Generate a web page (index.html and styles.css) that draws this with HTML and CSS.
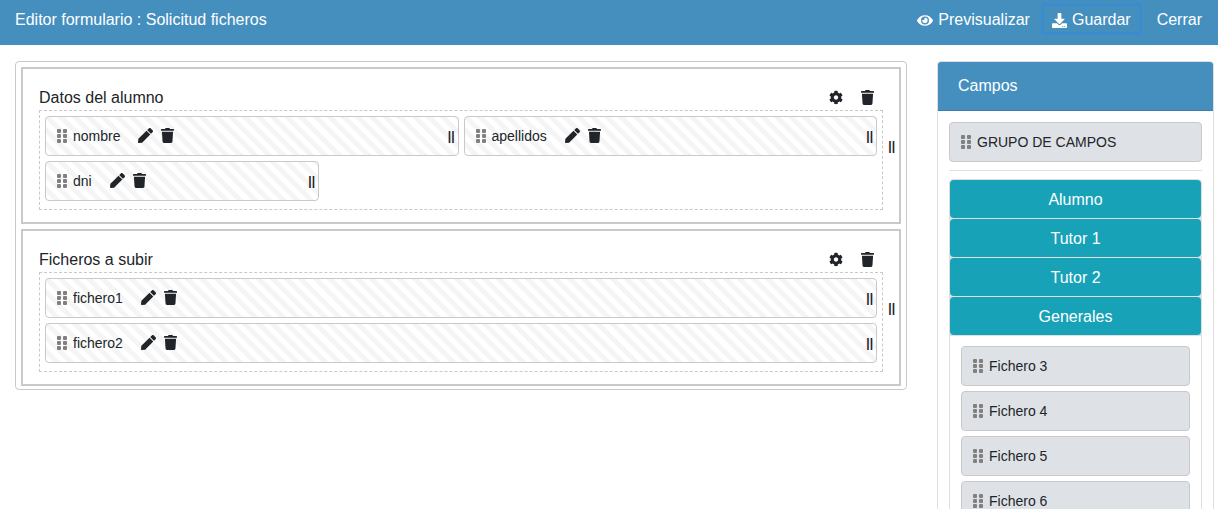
FILE: index.html
```html
<!DOCTYPE html>
<html lang="es">
<head>
    <meta charset="UTF-8">
    <meta name="viewport" content="width=device-width, initial-scale=1.0">
    <title>Editor formulario</title>
    <link rel="stylesheet" href="styles.css">
</head>
<body>

    <!-- Shared icons -->
    <svg class="sprite" aria-hidden="true">
        <symbol id="eye" viewBox="0 0 576 512"><path d="M572.52 241.4C518.29 135.59 410.93 64 288 64S57.68 135.64 3.48 241.41a32.35 32.35 0 0 0 0 29.19C57.71 376.41 165.07 448 288 448s230.32-71.64 284.52-177.41a32.35 32.35 0 0 0 0-29.19zM288 400a144 144 0 1 1 144-144 143.93 143.93 0 0 1-144 144zm0-240a95.31 95.31 0 0 0-25.31 3.79 47.85 47.85 0 0 1-66.9 66.9A95.78 95.78 0 1 0 288 160z"/></symbol>
        <symbol id="download" viewBox="0 0 512 512"><path d="M216 0h80c13.3 0 24 10.7 24 24v168h87.7c17.8 0 26.7 21.5 14.1 34.1L269.7 378.3c-7.5 7.5-19.8 7.5-27.3 0L90.1 226.1c-12.6-12.6-3.7-34.1 14.1-34.1H192V24c0-13.3 10.7-24 24-24zm296 376v112c0 13.3-10.7 24-24 24H24c-13.3 0-24-10.7-24-24V376c0-13.3 10.7-24 24-24h146.700l49 49c20.100 20.100 52.500 20.100 72.600 0l49-49H488c13.300 0 24 10.700 24 24zm-124 88c0-11-9-20-20-20s-20 9-20 20 9 20 20 20 20-9 20-20zm64 0c0-11-9-20-20-20s-20 9-20 20 9 20 20 20 20-9 20-20z"/></symbol>
        <symbol id="pen" viewBox="0 0 512 512"><path d="M290.740 93.240l128.020 128.020-277.990 277.990-114.140 12.600C11.350 513.540-1.560 500.620.14 485.340l12.700-114.220 277.900-277.880zm207.200-19.060l-60.110-60.110c-18.750-18.750-49.160-18.750-67.910 0l-56.550 56.550 128.020 128.020 56.550-56.550c18.750-18.760 18.750-49.160 0-67.910z"/></symbol>
        <symbol id="trash" viewBox="0 0 448 512"><path d="M432 32H312l-9.400-18.700A24 24 0 0 0 281.100 0H166.800a23.720 23.720 0 0 0-21.400 13.300L136 32H16A16 16 0 0 0 0 48v32a16 16 0 0 0 16 16h416a16 16 0 0 0 16-16V48a16 16 0 0 0-16-16zM53.200 467a48 48 0 0 0 47.900 45h245.800a48 48 0 0 0 47.900-45L416 128H32z"/></symbol>
        <symbol id="cog" viewBox="0 0 512 512"><path d="M487.400 315.700l-42.600-24.600c4.300-23.200 4.300-47 0-70.200l42.600-24.600c4.900-2.800 7.100-8.600 5.500-14-11.100-35.600-30-67.800-54.700-94.600-3.800-4.100-10-5.100-14.800-2.300L380.800 110c-17.900-15.400-38.500-27.300-60.800-35.100V25.800c0-5.600-3.900-10.500-9.400-11.700-36.700-8.200-74.300-7.800-109.200 0-5.500 1.200-9.400 6.100-9.400 11.700V75c-22.200 7.900-42.800 19.800-60.800 35.100L88.700 85.500c-4.900-2.800-11-1.900-14.800 2.300-24.700 26.700-43.600 58.900-54.700 94.600-1.700 5.400.6 11.200 5.500 14L67.300 221c-4.300 23.200-4.300 47 0 70.200l-42.600 24.600c-4.900 2.800-7.100 8.600-5.500 14 11.100 35.600 30 67.800 54.700 94.600 3.800 4.100 10 5.100 14.800 2.300l42.600-24.600c17.900 15.400 38.500 27.300 60.800 35.100v49.200c0 5.600 3.900 10.500 9.400 11.700 36.700 8.200 74.300 7.800 109.200 0 5.500-1.200 9.400-6.100 9.400-11.700v-49.200c22.200-7.900 42.800-19.800 60.800-35.100l42.600 24.600c4.900 2.800 11 1.900 14.800-2.300 24.700-26.700 43.600-58.900 54.700-94.600 1.500-5.500-.7-11.300-5.600-14.100zM256 336c-44.100 0-80-35.900-80-80s35.900-80 80-80 80 35.900 80 80-35.900 80-80 80z"/></symbol>
        <symbol id="grip" viewBox="0 0 10 14"><rect width="4" height="4" rx="1"/><rect x="6" width="4" height="4" rx="1"/><rect y="5" width="4" height="4" rx="1"/><rect x="6" y="5" width="4" height="4" rx="1"/><rect y="10" width="4" height="4" rx="1"/><rect x="6" y="10" width="4" height="4" rx="1"/></symbol>
    </svg>

    <header class="topbar">
        <h1 class="topbar-title">Editor formulario : Solicitud ficheros</h1>
        <button class="btn" type="button"><svg class="icon icon-eye"><use href="#eye"/></svg>Previsualizar</button>
        <button class="btn btn-active" type="button"><svg class="icon icon-download"><use href="#download"/></svg>Guardar</button>
        <button class="btn" type="button">Cerrar</button>
    </header>

    <div class="layout">
        <main class="board">
            <section class="group">
                <div class="group-head">
                    <h2 class="group-title">Datos del alumno</h2>
                    <button class="icon-btn" type="button" aria-label="Configurar"><svg class="icon icon-cog"><use href="#cog"/></svg></button>
                    <button class="icon-btn" type="button" aria-label="Eliminar"><svg class="icon icon-trash"><use href="#trash"/></svg></button>
                </div>
                <div class="fields">
                    <div class="field half">
                        <svg class="icon grip"><use href="#grip"/></svg>
                        <span class="field-name">nombre</span>
                        <button class="icon-btn" type="button" aria-label="Editar"><svg class="icon icon-pen"><use href="#pen"/></svg></button>
                        <button class="icon-btn" type="button" aria-label="Eliminar"><svg class="icon icon-trash"><use href="#trash"/></svg></button>
                        <span class="resize">||</span>
                    </div>
                    <div class="field half">
                        <svg class="icon grip"><use href="#grip"/></svg>
                        <span class="field-name">apellidos</span>
                        <button class="icon-btn" type="button" aria-label="Editar"><svg class="icon icon-pen"><use href="#pen"/></svg></button>
                        <button class="icon-btn" type="button" aria-label="Eliminar"><svg class="icon icon-trash"><use href="#trash"/></svg></button>
                        <span class="resize">||</span>
                    </div>
                    <div class="field third">
                        <svg class="icon grip"><use href="#grip"/></svg>
                        <span class="field-name">dni</span>
                        <button class="icon-btn" type="button" aria-label="Editar"><svg class="icon icon-pen"><use href="#pen"/></svg></button>
                        <button class="icon-btn" type="button" aria-label="Eliminar"><svg class="icon icon-trash"><use href="#trash"/></svg></button>
                        <span class="resize">||</span>
                    </div>
                </div>
                <span class="group-resize">||</span>
            </section>

            <section class="group">
                <div class="group-head">
                    <h2 class="group-title">Ficheros a subir</h2>
                    <button class="icon-btn" type="button" aria-label="Configurar"><svg class="icon icon-cog"><use href="#cog"/></svg></button>
                    <button class="icon-btn" type="button" aria-label="Eliminar"><svg class="icon icon-trash"><use href="#trash"/></svg></button>
                </div>
                <div class="fields">
                    <div class="field">
                        <svg class="icon grip"><use href="#grip"/></svg>
                        <span class="field-name">fichero1</span>
                        <button class="icon-btn" type="button" aria-label="Editar"><svg class="icon icon-pen"><use href="#pen"/></svg></button>
                        <button class="icon-btn" type="button" aria-label="Eliminar"><svg class="icon icon-trash"><use href="#trash"/></svg></button>
                        <span class="resize">||</span>
                    </div>
                    <div class="field">
                        <svg class="icon grip"><use href="#grip"/></svg>
                        <span class="field-name">fichero2</span>
                        <button class="icon-btn" type="button" aria-label="Editar"><svg class="icon icon-pen"><use href="#pen"/></svg></button>
                        <button class="icon-btn" type="button" aria-label="Eliminar"><svg class="icon icon-trash"><use href="#trash"/></svg></button>
                        <span class="resize">||</span>
                    </div>
                </div>
                <span class="group-resize">||</span>
            </section>
        </main>

        <aside class="panel">
            <h2 class="panel-head">Campos</h2>
            <div class="panel-body">
                <div class="source"><svg class="icon grip"><use href="#grip"/></svg>GRUPO DE CAMPOS</div>
                <hr class="divider">
                <div class="accordion">
                    <button class="section-btn" type="button">Alumno</button>
                    <button class="section-btn" type="button">Tutor 1</button>
                    <button class="section-btn" type="button">Tutor 2</button>
                    <button class="section-btn" type="button">Generales</button>
                    <div class="section-body">
                        <div class="source"><svg class="icon grip"><use href="#grip"/></svg>Fichero 3</div>
                        <div class="source"><svg class="icon grip"><use href="#grip"/></svg>Fichero 4</div>
                        <div class="source"><svg class="icon grip"><use href="#grip"/></svg>Fichero 5</div>
                        <div class="source"><svg class="icon grip"><use href="#grip"/></svg>Fichero 6</div>
                    </div>
                </div>
            </div>
        </aside>
    </div>

</body>
</html>
```
FILE: styles.css
```css
* {
    box-sizing: border-box;
}
body {
    margin: 0;
    font-family: "Liberation Sans", Arial, sans-serif;
    font-size: 16px;
    line-height: 24px;
    color: #212529;
    background: #fff;
}
h1, h2 {
    margin: 0;
    font-size: 16px;
    font-weight: normal;
}
button {
    font-family: inherit;
    font-size: 16px;
    line-height: 24px;
    border: none;
    cursor: pointer;
}
.sprite {
    display: none;
}
.icon {
    display: block;
    flex: none;
    fill: currentColor;
}
.icon-eye {
    width: 16px;
    height: 15px;
}
.icon-download {
    width: 15px;
    height: 15px;
}
.icon-pen {
    width: 15px;
    height: 15px;
}
.icon-trash {
    width: 13px;
    height: 15px;
}
.icon-cog {
    width: 14px;
    height: 15px;
}
.grip {
    width: 10px;
    height: 14px;
    color: #808080;
}

/* Top bar */
.topbar {
    display: flex;
    align-items: center;
    padding: 3px 5px 10px 15px;
    background: #458fbf;
    color: #fff;
}
.topbar-title {
    flex: 1;
    padding-top: 2px;
}
.btn {
    display: flex;
    align-items: center;
    gap: 5px;
    padding: 5px 11px 3px;
    background: none;
    color: #fff;
    border-radius: 4px;
}
.btn-active {
    margin-right: 4px;
    box-shadow: inset 0 0 0 3px #3b8bcf;
}

.layout {
    display: grid;
    grid-template-columns: 1fr 277px;
    align-items: start;
    gap: 30px;
    padding: 16px 4px 0 15px;
}

/* Form board */
.board {
    display: flex;
    flex-direction: column;
    gap: 5px;
    padding: 5px 5px 3px;
    border: 1px solid #c9c9c9;
    border-radius: 4px;
}
.group {
    position: relative;
    padding: 16px 16px 12px;
    border: 2px solid #c9c9c9;
}
.group-head {
    display: flex;
    align-items: center;
    gap: 18px;
    padding-right: 9px;
}
.group-title {
    flex: 1;
    padding-top: 1px;
}
.icon-btn {
    padding: 0 0 1px;
    background: none;
    color: #212529;
}
.fields {
    display: grid;
    grid-template-columns: repeat(6, 1fr);
    gap: 5px;
    padding: 5px 5px 8px;
    border: 1px dashed #c9c9c9;
}
.field {
    display: flex;
    align-items: center;
    grid-column: span 6;
    gap: 8px;
    height: 40px;
    padding: 0 3px 0 11px;
    border: 1px solid #c9c9c9;
    border-radius: 4px;
    background: repeating-linear-gradient(45deg, #fff, #fff 5px, #f5f5f5 5px, #f5f5f5 10px);
    font-size: 14px;
}
.half {
    grid-column: span 3;
}
.third {
    grid-column: span 2;
}
.field-name {
    margin: 0 10px 0 -2px;
}
.resize {
    margin-left: auto;
    font-size: 12px;
    font-weight: bold;
}
.group-resize {
    position: absolute;
    top: 50%;
    right: 4px;
    transform: translateY(-50%);
    font-size: 12px;
    font-weight: bold;
}

/* Fields panel */
.panel {
    border: 1px solid #dfdfdf;
    border-radius: 4px;
}
.panel-head {
    padding: 12px 20px;
    border-bottom: 1px solid #3d7eaa;
    border-radius: 3px 3px 0 0;
    background: #458fbf;
    color: #fff;
}
.panel-body {
    padding: 11px;
}
.source {
    display: flex;
    align-items: center;
    gap: 6px;
    height: 40px;
    padding: 0 11px;
    border: 1px solid #c9c9c9;
    border-radius: 4px;
    background: #dee2e6;
    font-size: 14px;
}
.divider {
    margin: 8px 0;
    border: 0;
    border-top: 1px solid #dfdfdf;
}
.accordion {
    display: flex;
    flex-direction: column;
    gap: 1px;
    border: 1px solid #dfdfdf;
    border-radius: 4px;
    background: #dfdfdf;
}
.section-btn {
    padding: 8px 12px 6px;
    border-radius: 4px;
    background: #17a2b8;
    color: #fff;
}
.section-body {
    display: flex;
    flex-direction: column;
    gap: 5px;
    padding: 10px 11px;
    background: #fff;
}
```
